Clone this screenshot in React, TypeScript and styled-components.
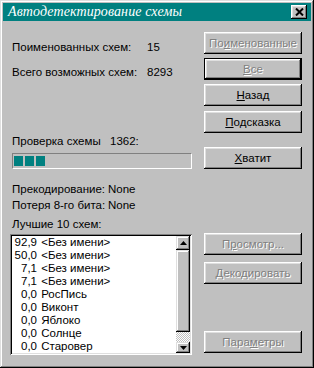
import React from 'react';
import styled, {createGlobalStyle, css} from 'styled-components';

const GlobalStyle = createGlobalStyle`
  html, body {
    margin: 0;
    padding: 0;
    background: #c0c0c0;
  }
  body {
    font-family: "Liberation Sans", Arial, sans-serif;
    font-size: 11.5px;
  }
`

const raised = css`
  box-shadow: inset -1px -1px #000, inset 1px 1px #fff, inset -2px -2px #808080, inset 2px 2px #dfdfdf;
`

const Window = styled.div`
  width: 314px;
  height: 368px;
  box-sizing: border-box;
  padding: 3px;
  background: #c0c0c0;
  box-shadow: inset -1px -1px #000, inset 1px 1px #dfdfdf, inset -2px -2px #808080, inset 2px 2px #fff;
  display: flex;
  flex-direction: column;
`

const TitleBar = styled.div`
  height: 18px;
  background: #008080;
  display: flex;
  align-items: center;
  justify-content: space-between;
  padding-left: 5px;
`

const Title = styled.div`
  color: #fff;
  font-family: "Liberation Serif", "Times New Roman", serif;
  font-style: italic;
  font-size: 14px;
  letter-spacing: 0.1px;
`

const CloseButton = styled.div`
  width: 16px;
  height: 14px;
  margin-right: 4px;
  background: #c0c0c0;
  ${raised};
  display: flex;
  align-items: center;
  justify-content: center;
`

const Body = styled.div`
  display: flex;
  gap: 12px;
  padding: 0 9px;
`

const LeftPane = styled.div`
  width: 180px;
  display: flex;
  flex-direction: column;
`

const RightPane = styled.div`
  width: 98px;
  display: flex;
  flex-direction: column;
`

const InfoRow = styled.div<{$top: number}>`
  display: flex;
  height: 13px;
  line-height: 13px;
  margin-top: ${p => p.$top}px;
  color: #000;
  white-space: nowrap;
`

const Label = styled.span<{$width: number}>`
  width: ${p => p.$width}px;
  flex-shrink: 0;
`

const ProgressTrack = styled.div`
  margin-top: 5px;
  height: 16px;
  box-sizing: border-box;
  border: 1px solid;
  border-color: #808080 #fff #fff #808080;
  padding: 2px 1px;
  display: flex;
  gap: 2px;
`

const ProgressBlock = styled.div`
  width: 9px;
  height: 100%;
  background: #008080;
`

const ListBox = styled.div`
  margin-top: 3px;
  margin-left: -2px;
  width: 182px;
  height: 121px;
  box-sizing: border-box;
  background: #fff;
  box-shadow: inset 1px 1px #808080, inset -1px -1px #fff, inset 2px 2px #000, inset -2px -2px #dfdfdf;
  padding: 2px;
  display: flex;
`

const ListItems = styled.div`
  flex: 1;
  padding-left: 1px;
`

const ListItem = styled.div`
  height: 13px;
  line-height: 13px;
  display: flex;
  white-space: nowrap;
`

const Score = styled.span`
  width: 24px;
  text-align: right;
  margin-right: 1px;
`

const ScrollBar = styled.div`
  width: 14px;
  display: flex;
  flex-direction: column;
  background: #c0c0c0;
`

const ScrollArrow = styled.div<{$height: number}>`
  height: ${p => p.$height}px;
  background: #c0c0c0;
  box-shadow: inset -1px -1px #000, inset 1px 1px #dfdfdf, inset -2px -2px #808080, inset 2px 2px #fff;
  display: flex;
  align-items: center;
  justify-content: center;
`

const ScrollThumb = styled.div`
  height: 82px;
  background: #c0c0c0;
  box-shadow: inset -1px -1px #000, inset 1px 1px #dfdfdf, inset -2px -2px #808080, inset 2px 2px #fff;
`

const ScrollTrack = styled.div`
  height: 10px;
  background-image: conic-gradient(#fff 25%, #c0c0c0 0 50%, #fff 0 75%, #c0c0c0 0);
  background-size: 2px 2px;
`

const Button = styled.div<{$top: number; $disabled?: boolean; $default?: boolean}>`
  margin-top: ${p => p.$top}px;
  height: 22px;
  box-sizing: border-box;
  display: flex;
  align-items: center;
  justify-content: center;
  background: #c0c0c0;
  ${raised};
  color: ${p => (p.$disabled ? '#808080' : '#000')};
  text-shadow: ${p => (p.$disabled ? '1px 1px 0 #fff' : 'none')};
  ${p => p.$default && css`
    border: 1px solid #000;
  `}

  & u {
    text-underline-offset: 1px;
  }
`

const Arrow = ({up}: {up?: boolean}) => (
  <svg width="7" height="4" viewBox="0 0 7 4">
    <path d={up ? 'M3.5 0 L7 4 L0 4 Z' : 'M0 0 L7 0 L3.5 4 Z'} fill="#000" />
  </svg>
)

const items: [string, string][] = [
  ['92,9', '<Без имени>'],
  ['50,0', '<Без имени>'],
  ['7,1', '<Без имени>'],
  ['7,1', '<Без имени>'],
  ['0,0', 'РосПись'],
  ['0,0', 'Виконт'],
  ['0,0', 'Яблоко'],
  ['0,0', 'Солнце'],
  ['0,0', 'Старовер'],
]

export default function App() {
  return <>
    <GlobalStyle/>
    <Window>
      <TitleBar>
        <Title>Автодетектирование схемы</Title>
        <CloseButton>
          <svg width="9" height="8" viewBox="0 0 9 8">
            <path d="M1 0.5 L8 7.5 M8 0.5 L1 7.5" stroke="#000" strokeWidth="2" />
          </svg>
        </CloseButton>
      </TitleBar>

      <Body>
        <LeftPane>
          <InfoRow $top={20}><Label $width={135}>Поименованных схем:</Label>15</InfoRow>
          <InfoRow $top={12}><Label $width={135}>Всего возможных схем:</Label>8293</InfoRow>

          <InfoRow $top={56}><Label $width={98}>Проверка схемы</Label>1362:</InfoRow>
          <ProgressTrack>
            <ProgressBlock/>
            <ProgressBlock/>
            <ProgressBlock/>
          </ProgressTrack>

          <InfoRow $top={14}><Label $width={96}>Прекодирование:</Label>None</InfoRow>
          <InfoRow $top={3}><Label $width={96}>Потеря 8-го бита:</Label>None</InfoRow>
          <InfoRow $top={6}>Лучшие 10 схем:</InfoRow>

          <ListBox>
            <ListItems>
              {items.map(([score, name], i) => (
                <ListItem key={i}><Score>{score}</Score>&nbsp;{name}</ListItem>
              ))}
            </ListItems>
            <ScrollBar>
              <ScrollArrow $height={14}><Arrow up/></ScrollArrow>
              <ScrollThumb/>
              <ScrollTrack/>
              <ScrollArrow $height={11}><Arrow/></ScrollArrow>
            </ScrollBar>
          </ListBox>
        </LeftPane>

        <RightPane>
          <Button $top={11} $disabled>По<u>и</u>менованные</Button>
          <Button $top={4} $disabled $default><u>В</u>се</Button>
          <Button $top={4}><u>Н</u>азад</Button>
          <Button $top={5}><u>П</u>одсказка</Button>
          <Button $top={14}><u>Х</u>ватит</Button>
          <Button $top={64} $disabled>П<u>р</u>осмотр...</Button>
          <Button $top={7} $disabled><u>Д</u>екодировать</Button>
          <Button $top={47} $disabled>Пара<u>м</u>етры</Button>
        </RightPane>
      </Body>
    </Window>
  </>
}
